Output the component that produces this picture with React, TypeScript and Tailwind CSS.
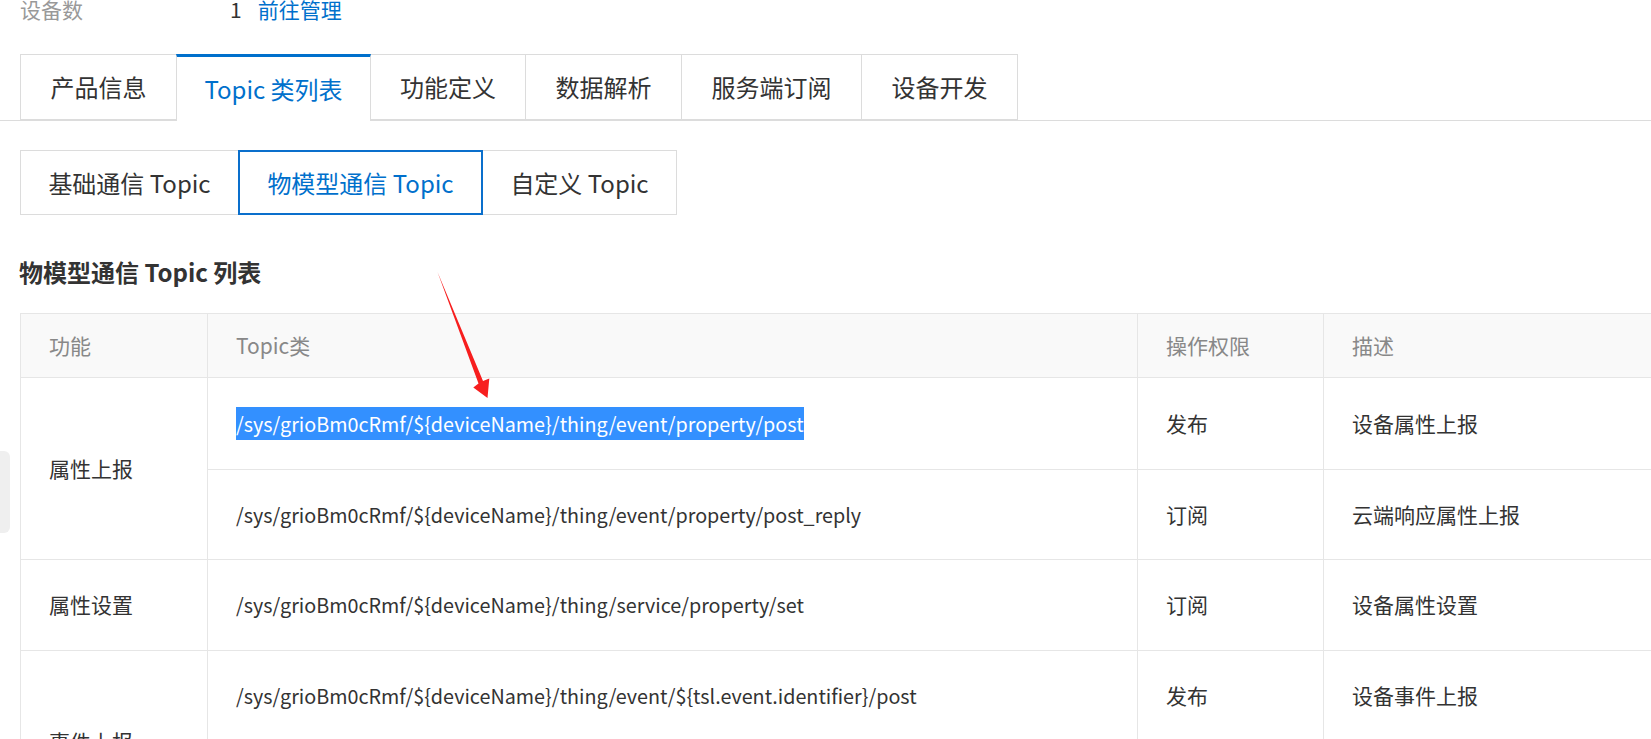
import React from "react";

const FONT = { fontFamily: '"Noto Sans CJK SC", "Noto Sans", sans-serif' };

const tabs = [
  { label: "产品信息", w: "w-[157px]" },
  { label: "Topic 类列表", w: "w-[195px]", active: true },
  { label: "功能定义", w: "w-[156px]" },
  { label: "数据解析", w: "w-[157px]" },
  { label: "服务端订阅", w: "w-[181px]" },
  { label: "设备开发", w: "w-[157px]" },
];

const subTabs = [
  { label: "基础通信 Topic", w: "w-[219px]" },
  { label: "物模型通信 Topic", w: "w-[245px]", active: true },
  { label: "自定义 Topic", w: "w-[195px]" },
];

const cell = "border border-[#e6e6e6] pl-[28px]";
const topic = `${cell} text-[19.75px]`;

export default function App() {
  return (
    <div
      className="relative w-[1651px] h-[739px] overflow-hidden bg-white text-[#333]"
      style={FONT}
    >
      {/* top info row */}
      <div className="flex items-center h-[30px] mt-[-6px] pl-[20px] text-[21px] leading-[30px]">
        <span className="w-[210px] text-[#999]">设备数</span>
        <span className="text-[#333]">1</span>
        <span className="ml-[16px] text-[#0070cc]">前往管理</span>
      </div>

      {/* main tabs */}
      <div className="flex mt-[30px] pl-[20px] border-b border-[#dcdcdc] h-[67px]">
        {tabs.map((t, i) =>
          t.active ? (
            <div
              key={i}
              className={`${t.w} h-[67px] flex items-center justify-center border-t-[3px] border-t-[#0070cc] border-x border-x-[#dcdcdc] bg-white text-[#0070cc] text-[24px] -ml-px relative z-10`}
            >
              {t.label}
            </div>
          ) : (
            <div
              key={i}
              className={`${t.w} h-[66px] flex items-center justify-center border border-[#dcdcdc] text-[24px] text-[#333] ${i === 0 ? "" : "-ml-px"}`}
            >
              {t.label}
            </div>
          )
        )}
      </div>

      {/* sub tabs */}
      <div className="flex mt-[29px] pl-[20px]">
        {subTabs.map((t, i) =>
          t.active ? (
            <div
              key={i}
              className={`${t.w} h-[65px] flex items-center justify-center border-2 border-[#0a6fcc] text-[#0070cc] text-[24px] -ml-px relative z-10`}
            >
              {t.label}
            </div>
          ) : (
            <div
              key={i}
              className={`${t.w} h-[65px] flex items-center justify-center border border-[#dcdcdc] text-[24px] text-[#333] ${i === 0 ? "" : "-ml-px"}`}
            >
              {t.label}
            </div>
          )
        )}
      </div>

      {/* title */}
      <div className="mt-[42px] pl-[19px] text-[24px] font-bold leading-[30px] text-[#333]">
        物模型通信 Topic 列表
      </div>

      {/* table */}
      <div className="mt-[26px] ml-[20px] w-[1700px]">
        <table className="border-collapse text-[21px] table-fixed w-[1700px]">
          <colgroup>
            <col className="w-[187px]" />
            <col className="w-[930px]" />
            <col className="w-[186px]" />
            <col />
          </colgroup>
          <thead>
            <tr className="h-[64px] bg-[#f9f9f9] text-[#888]">
              <th className={`${cell} text-left font-normal`}>功能</th>
              <th className={`${cell} text-left font-normal`}>Topic类</th>
              <th className={`${cell} text-left font-normal`}>操作权限</th>
              <th className={`${cell} text-left font-normal`}>描述</th>
            </tr>
          </thead>
          <tbody>
            <tr className="h-[92px]">
              <td rowSpan={2} className={cell}>属性上报</td>
              <td className={topic}>
                <span className="inline-block bg-[#3390ff] text-white leading-[33px]">
                  /sys/grioBm0cRmf/${"{deviceName}"}/thing/event/property/post
                </span>
              </td>
              <td className={cell}>发布</td>
              <td className={cell}>设备属性上报</td>
            </tr>
            <tr className="h-[90px]">
              <td className={topic}>
                /sys/grioBm0cRmf/${"{deviceName}"}/thing/event/property/post_reply
              </td>
              <td className={cell}>订阅</td>
              <td className={cell}>云端响应属性上报</td>
            </tr>
            <tr className="h-[91px]">
              <td className={cell}>属性设置</td>
              <td className={topic}>
                /sys/grioBm0cRmf/${"{deviceName}"}/thing/service/property/set
              </td>
              <td className={cell}>订阅</td>
              <td className={cell}>设备属性设置</td>
            </tr>
            <tr className="h-[91px]">
              <td rowSpan={2} className={cell}>事件上报</td>
              <td className={topic}>
                /sys/grioBm0cRmf/${"{deviceName}"}/thing/event/${"{tsl.event.identifier}"}/post
              </td>
              <td className={cell}>发布</td>
              <td className={cell}>设备事件上报</td>
            </tr>
            <tr className="h-[91px]">
              <td className={topic}>
                /sys/grioBm0cRmf/${"{deviceName}"}/thing/event/${"{tsl.event.identifier}"}/post_reply
              </td>
              <td className={cell}>订阅</td>
              <td className={cell}>云端响应事件上报</td>
            </tr>
          </tbody>
        </table>
      </div>

      {/* left floating gray handle */}
      <div className="absolute left-0 top-[451px] w-[10px] h-[82px] rounded-r-[6px] bg-[#efefef]" />

      {/* red annotation arrow */}
      <svg
        className="absolute left-0 top-0 pointer-events-none"
        width="1651"
        height="739"
        viewBox="0 0 1651 739"
      >
        <polygon
          points="437.5,272 483,381 489.3,378.5 487.5,398 473.3,387.5 478.5,383.5"
          fill="#f71e1e"
        />
      </svg>
    </div>
  );
}
